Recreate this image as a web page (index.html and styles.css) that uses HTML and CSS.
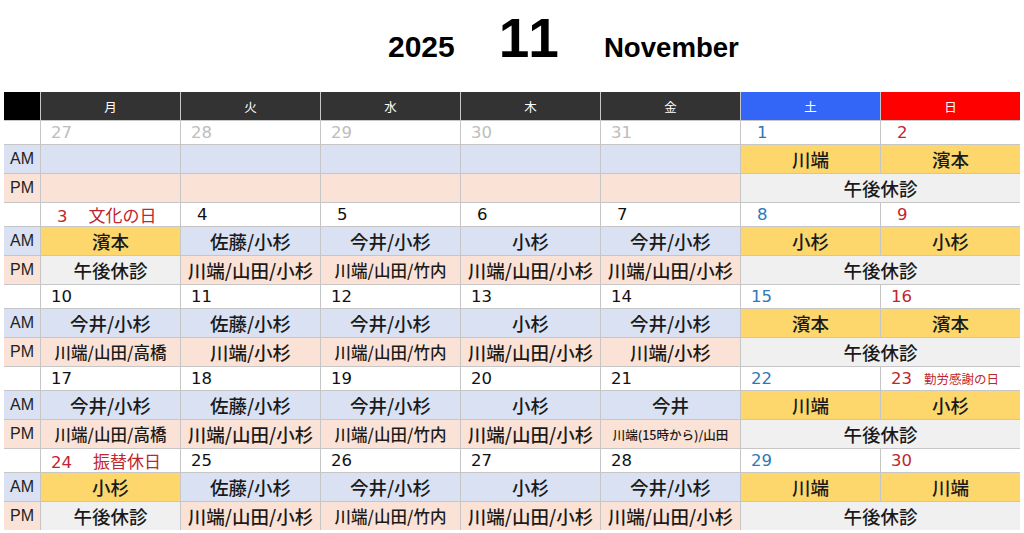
FILE: index.html
```html
<!DOCTYPE html>
<html lang="ja">
<head>
<meta charset="utf-8">
<title>2025 11 November</title>
<link rel="stylesheet" href="styles.css">
</head>
<body>
<div class="title">
  <span class="year">2025</span>
  <span class="month">11</span>
  <span class="mname">November</span>
</div>
<div class="cal">
  <div class="h corner"></div>
  <div class="h">月</div><div class="h">火</div><div class="h">水</div><div class="h">木</div><div class="h">金</div>
  <div class="h sat">土</div><div class="h sun">日</div>

  <!-- week 1 -->
  <div class="lbl date-l"></div>
  <div class="d prev">27</div><div class="d prev">28</div><div class="d prev">29</div><div class="d prev">30</div><div class="d prev">31</div>
  <div class="d blue one">1</div><div class="d red one">2</div>
  <div class="lbl am">AM</div>
  <div class="c am"></div><div class="c am"></div><div class="c am"></div><div class="c am"></div><div class="c am"></div>
  <div class="c yel">川端</div><div class="c yel">濱本</div>
  <div class="lbl pm">PM</div>
  <div class="c pm"></div><div class="c pm"></div><div class="c pm"></div><div class="c pm"></div><div class="c pm"></div>
  <div class="c gray span2">午後休診</div>

  <!-- week 2 -->
  <div class="lbl date-l"></div>
  <div class="d red one">3<span class="hol">文化の日</span></div><div class="d one">4</div><div class="d one">5</div><div class="d one">6</div><div class="d one">7</div>
  <div class="d blue one">8</div><div class="d red one">9</div>
  <div class="lbl am">AM</div>
  <div class="c yel">濱本</div><div class="c am">佐藤/小杉</div><div class="c am">今井/小杉</div><div class="c am">小杉</div><div class="c am">今井/小杉</div>
  <div class="c yel">小杉</div><div class="c yel">小杉</div>
  <div class="lbl pm">PM</div>
  <div class="c gray">午後休診</div><div class="c pm">川端/山田/小杉</div><div class="c pm sm">川端/山田/竹内</div><div class="c pm">川端/山田/小杉</div><div class="c pm">川端/山田/小杉</div>
  <div class="c gray span2">午後休診</div>

  <!-- week 3 -->
  <div class="lbl date-l"></div>
  <div class="d">10</div><div class="d">11</div><div class="d">12</div><div class="d">13</div><div class="d">14</div>
  <div class="d blue">15</div><div class="d red">16</div>
  <div class="lbl am">AM</div>
  <div class="c am">今井/小杉</div><div class="c am">佐藤/小杉</div><div class="c am">今井/小杉</div><div class="c am">小杉</div><div class="c am">今井/小杉</div>
  <div class="c yel">濱本</div><div class="c yel">濱本</div>
  <div class="lbl pm">PM</div>
  <div class="c pm sm">川端/山田/高橋</div><div class="c pm">川端/小杉</div><div class="c pm sm">川端/山田/竹内</div><div class="c pm">川端/山田/小杉</div><div class="c pm">川端/小杉</div>
  <div class="c gray span2">午後休診</div>

  <!-- week 4 -->
  <div class="lbl date-l"></div>
  <div class="d">17</div><div class="d">18</div><div class="d">19</div><div class="d">20</div><div class="d">21</div>
  <div class="d blue">22</div><div class="d red">23<span class="hol small">勤労感謝の日</span></div>
  <div class="lbl am">AM</div>
  <div class="c am">今井/小杉</div><div class="c am">佐藤/小杉</div><div class="c am">今井/小杉</div><div class="c am">小杉</div><div class="c am">今井</div>
  <div class="c yel">川端</div><div class="c yel">小杉</div>
  <div class="lbl pm">PM</div>
  <div class="c pm sm">川端/山田/高橋</div><div class="c pm">川端/山田/小杉</div><div class="c pm sm">川端/山田/竹内</div><div class="c pm">川端/山田/小杉</div><div class="c pm xs">川端(15時から)/山田</div>
  <div class="c gray span2">午後休診</div>

  <!-- week 5 -->
  <div class="lbl date-l"></div>
  <div class="d red">24<span class="hol">振替休日</span></div><div class="d">25</div><div class="d">26</div><div class="d">27</div><div class="d">28</div>
  <div class="d blue">29</div><div class="d red">30</div>
  <div class="lbl am">AM</div>
  <div class="c yel">小杉</div><div class="c am">佐藤/小杉</div><div class="c am">今井/小杉</div><div class="c am">小杉</div><div class="c am">今井/小杉</div>
  <div class="c yel">川端</div><div class="c yel">川端</div>
  <div class="lbl pm">PM</div>
  <div class="c gray">午後休診</div><div class="c pm">川端/山田/小杉</div><div class="c pm sm">川端/山田/竹内</div><div class="c pm">川端/山田/小杉</div><div class="c pm">川端/山田/小杉</div>
  <div class="c gray span2">午後休診</div>
</div>
</body>
</html>
```
FILE: styles.css
```css
* { box-sizing: border-box; }
html, body { margin: 0; padding: 0; background: #fff; }
body {
  width: 1024px;
  height: 533px;
  overflow: hidden;
  font-family: "Noto Sans CJK JP", "Noto Sans", sans-serif;
  color: #1a1a1a;
}
.title {
  height: 92px;
  display: flex;
  align-items: baseline;
  padding-left: 388px;
  padding-top: 12px;
  font-family: "Liberation Sans", Arial, sans-serif;
  font-weight: bold;
  color: #000;
}
.year { font-size: 30px; line-height: 53px; }
.month { font-size: 55px; line-height: 53px; margin-left: 44px; letter-spacing: 2px; }
.mname { font-size: 27.6px; line-height: 53px; margin-left: 43px; }

.cal {
  margin-left: 4px;
  width: 1016px;
  display: grid;
  grid-template-columns: 36px repeat(7, 139px);
  grid-template-rows: 28px repeat(5, 23px 28px 28px);
  gap: 1px;
  background: #c6c6c6;
}
.h {
  background: #333333;
  color: #fff;
  font-size: 12.5px;
  display: flex;
  align-items: center;
  justify-content: center;
}
.h.corner { background: #000; }
.h.sat { background: #3366f6; }
.h.sun { background: #ff0000; }

.lbl {
  font-family: "Liberation Sans", "Noto Sans", sans-serif;
  font-size: 16px;
  display: flex;
  align-items: center;
  padding-left: 6px;
  color: #222;
}
.date-l { background: #fff; }
.am { background: #d9e1f2; }
.pm { background: #fbe2d6; }
.yel { background: #fdd76b; }
.gray { background: #f0f0f0; }

.d {
  background: #fff;
  font-family: "DejaVu Sans", "Noto Sans CJK JP", sans-serif;
  font-size: 16.5px;
  line-height: 23px;
  padding-left: 10px;
  color: #111;
  display: flex;
  align-items: baseline;
  white-space: nowrap;
}
.d.one { padding-left: 16px; }
.d.prev { color: #bdbdbd; }
.d.blue { color: #2e78b8; }
.d.red { color: #c0262d; }
.hol {
  font-family: "Noto Sans CJK JP", sans-serif;
  font-size: 17px;
  margin-left: 21px;
}
.hol.small { font-size: 12.5px; margin-left: 12px; }

.c {
  font-size: 18.5px;
  font-weight: 500;
  display: flex;
  align-items: center;
  justify-content: center;
  white-space: nowrap;
  color: #1a1a1a;
}
.c.sm { font-size: 16.5px; }
.c.xs { font-size: 12.5px; }
.span2 { grid-column: span 2; }
```
